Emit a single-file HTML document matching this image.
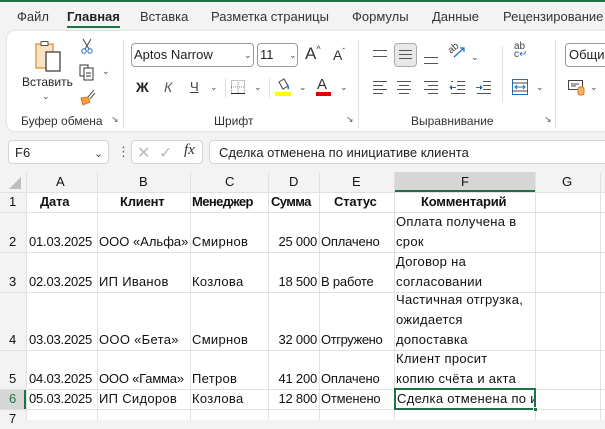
<!DOCTYPE html>
<html><head><meta charset="utf-8"><style>
*{margin:0;padding:0;box-sizing:border-box}
body{width:605px;height:420px;overflow:hidden;background:#f3f3f3;font-family:"Liberation Sans",sans-serif;position:relative;color:#222}
.a{position:absolute;white-space:nowrap}
.t{font-size:13px;top:9px;color:#333}
.pan{position:absolute;left:7px;top:31px;width:610px;height:100px;background:#fff;border-radius:8px;box-shadow:0 0 2px #ccc}
.sep{position:absolute;width:1px;background:#e0e0e0}
.gl{font-size:12px;top:114px;color:#333}
.box{position:absolute;border:1px solid #9a9a9a;border-radius:4px;background:#fff}
.chev{font-size:9px;color:#444}
.grid{position:absolute;left:0;top:172px;width:605px;height:248px;background:#fff}
.c{position:absolute;font-size:13px;color:#111;letter-spacing:-0.2px;white-space:nowrap;line-height:20px}
.w{letter-spacing:0.3px}
.hl{position:absolute;left:0;width:605px;height:1px;background:#e1e1e1}
.vl{position:absolute;top:0;width:1px;height:248px;background:#e1e1e1}
.ln{position:absolute;height:1px;background:#555}
</style></head><body>
<div class="a" style="left:0;top:0;width:605px;height:2px;background:#1e7145"></div>
<div class="a t" style="left:17px">Файл</div>
<div class="a t" style="left:67px;font-weight:bold;color:#222">Главная</div>
<div class="a" style="left:67px;top:26px;width:53px;height:2px;background:#1e7145"></div>
<div class="a t" style="left:140px">Вставка</div>
<div class="a t" style="left:211px">Разметка страницы</div>
<div class="a t" style="left:352px">Формулы</div>
<div class="a t" style="left:432px">Данные</div>
<div class="a t" style="left:503px">Рецензирование</div>

<div class="pan"></div>
<svg class="a" style="left:33px;top:40px" width="32" height="32" viewBox="0 0 32 32"><rect x="3" y="4" width="17" height="24" fill="#fbe3c4" stroke="#d98a2b" stroke-width="1.2"/><rect x="8" y="1.5" width="7" height="4" fill="#fff" stroke="#555"/><rect x="13" y="12" width="14" height="19" fill="#fff" stroke="#333" stroke-width="1.2"/></svg>
<div class="a" style="left:22px;top:75px;font-size:12px">Вставить</div>
<div class="a chev" style="left:42px;top:91px">⌄</div>
<svg class="a" style="left:80px;top:38px" width="14" height="16"><path d="M3 1 L9 11 M11 1 L5 11" stroke="#444" fill="none"/><circle cx="4" cy="13" r="2.2" stroke="#1f6fc5" fill="none"/><circle cx="10" cy="13" r="2.2" stroke="#1f6fc5" fill="none"/></svg>
<svg class="a" style="left:79px;top:64px" width="16" height="17"><rect x="1" y="1" width="8" height="11" fill="none" stroke="#333"/><rect x="5" y="4" width="9" height="12" fill="#fff" stroke="#333"/><path d="M7 9h5M7 12h5" stroke="#333"/></svg>
<div class="a chev" style="left:102px;top:66px">⌄</div>
<svg class="a" style="left:79px;top:88px" width="18" height="18"><path d="M2 10 L9 9 L11 14 L4 17 Z" fill="#f0a33a" stroke="#d9781a"/><path d="M9 9 L15 2 M11 11 L16 5" stroke="#555" fill="none"/></svg>
<div class="a gl" style="left:21px">Буфер обмена</div>
<div class="a" style="left:111px;top:114px;font-size:9px;color:#555">↘</div>
<div class="sep" style="left:123px;top:40px;height:88px"></div>
<div class="box" style="left:131px;top:43px;width:123px;height:24px"></div>
<div class="a" style="left:134px;top:47px;font-size:13px">Aptos Narrow</div>
<div class="a chev" style="left:244px;top:50px">⌄</div>
<div class="box" style="left:257px;top:43px;width:41px;height:24px"></div>
<div class="a" style="left:260px;top:47px;font-size:13px">11</div>
<div class="a chev" style="left:289px;top:50px">⌄</div>
<div class="a" style="left:305px;top:44px;font-size:17px;color:#333">A<span style="font-size:9px;vertical-align:top">^</span></div>
<div class="a" style="left:333px;top:47px;font-size:14px;color:#333">A<span style="font-size:8px;vertical-align:top">ˇ</span></div>
<div class="a" style="left:136px;top:79px;font-size:14px;font-weight:bold">Ж</div>
<div class="a" style="left:164px;top:79px;font-size:14px;font-style:italic;color:#555">К</div>
<div class="a" style="left:190px;top:79px;font-size:13px;text-decoration:underline;color:#444">Ч</div>
<div class="a chev" style="left:210px;top:82px">⌄</div>
<div class="sep" style="left:225px;top:78px;height:20px"></div>
<svg class="a" style="left:231px;top:80px" width="14" height="14"><rect x="0.5" y="0.5" width="13" height="13" fill="none" stroke="#888" stroke-dasharray="1 1"/><path d="M7 0v14M0 7h14" stroke="#888" stroke-dasharray="1 1"/><path d="M0 13.5h14" stroke="#222"/></svg>
<div class="a chev" style="left:254px;top:82px">⌄</div>
<div class="sep" style="left:269px;top:78px;height:20px"></div>
<svg class="a" style="left:275px;top:78px" width="16" height="18"><path d="M4 4 L9 1 L13 8 L8 11 Z" fill="none" stroke="#444"/><path d="M12 6 q2 3 1 5" stroke="#1f6fc5" fill="none" stroke-width="1.5"/><rect x="0" y="14" width="16" height="4" fill="#ffff00"/></svg>
<div class="a chev" style="left:299px;top:82px">⌄</div>
<div class="a" style="left:317px;top:76px;font-size:15px;color:#333">A</div>
<div class="a" style="left:316px;top:92px;width:15px;height:4px;background:#e00000"></div>
<div class="a chev" style="left:340px;top:82px">⌄</div>
<div class="a gl" style="left:214px">Шрифт</div>
<div class="a" style="left:346px;top:114px;font-size:9px;color:#555">↘</div>
<div class="sep" style="left:358px;top:40px;height:88px"></div>
<div class="ln" style="left:373px;top:50px;width:14px"></div><div class="ln" style="left:373px;top:56px;width:14px"></div>
<div class="a" style="left:394px;top:43px;width:23px;height:24px;background:#e8e8e8;border:1px solid #aaa;border-radius:4px"></div>
<div class="ln" style="left:399px;top:50px;width:13px"></div><div class="ln" style="left:399px;top:54px;width:13px"></div><div class="ln" style="left:399px;top:58px;width:13px"></div>
<div class="ln" style="left:424px;top:57px;width:14px"></div><div class="ln" style="left:424px;top:63px;width:14px"></div>
<div class="a" style="left:448px;top:43px;font-size:10px;color:#444;transform:rotate(-40deg)">ab</div>
<svg class="a" style="left:452px;top:45px" width="14" height="14"><path d="M2 12 L12 3 M8 3h4v4" stroke="#1f6fc5" fill="none" stroke-width="1.2"/></svg>
<div class="a chev" style="left:471px;top:52px">⌄</div>
<svg class="a" style="left:373px;top:80px" width="120" height="14" stroke="#555" stroke-width="1">
<path d="M0 1.5h14M0 5.5h10M0 9.5h14M0 13.5h10"/>
<path d="M24 1.5h14M26 5.5h10M24 9.5h14M26 13.5h10"/>
<path d="M51 1.5h14M55 5.5h10M51 9.5h14M55 13.5h10"/>
<path d="M84 1.5h8M84 5.5h8M84 9.5h8M78 13.5h14M78 1.5h2"/><path d="M77 7.5h6M79 5.5l-2 2 2 2" stroke="#1f6fc5"/>
<path d="M110 1.5h8M110 5.5h8M110 9.5h8M104 13.5h14"/><path d="M103 7.5h6M107 5.5l2 2-2 2" stroke="#1f6fc5"/>
</svg>
<div class="sep" style="left:502px;top:46px;height:56px"></div>
<div class="a" style="left:514px;top:43px;font-size:10px;line-height:8px;color:#444">ab<br>c<span style="color:#1f6fc5">↵</span></div>
<svg class="a" style="left:512px;top:79px" width="16" height="16"><rect x="0.5" y="0.5" width="15" height="15" fill="none" stroke="#1f6fc5"/><path d="M0 4h16M0 12h16" stroke="#444"/><path d="M3 8h10M5 6l-2 2 2 2M11 6l2 2-2 2" stroke="#1f6fc5" fill="none"/></svg>
<div class="a chev" style="left:536px;top:82px">⌄</div>
<div class="a gl" style="left:411px">Выравнивание</div>
<div class="a" style="left:544px;top:114px;font-size:9px;color:#555">↘</div>
<div class="sep" style="left:555px;top:40px;height:88px"></div>
<div class="box" style="left:565px;top:43px;width:60px;height:24px"></div>
<div class="a" style="left:569px;top:47px;font-size:13px">Общий</div>
<svg class="a" style="left:568px;top:80px" width="18" height="16"><rect x="0.5" y="0.5" width="14" height="9" fill="none" stroke="#444"/><path d="M3 4h8M3 6h5" stroke="#444"/><rect x="10" y="7" width="6" height="8" rx="2" fill="#f6b26b" stroke="#d9781a"/></svg>
<div class="a chev" style="left:590px;top:82px">⌄</div>

<div class="box" style="left:8px;top:140px;width:101px;height:24px;border-color:#d5d5d5"></div>
<div class="a" style="left:15px;top:145px;font-size:13px">F6</div>
<div class="a chev" style="left:94px;top:147px;font-size:11px">⌄</div>
<div class="a" style="left:117px;top:144px;font-size:13px;color:#555">⋮</div>
<div class="box" style="left:131px;top:140px;width:72px;height:24px;border-color:#d5d5d5"></div>
<div class="a" style="left:137px;top:143px;font-size:16px;color:#bbb">✕</div>
<div class="a" style="left:159px;top:143px;font-size:16px;color:#bbb">✓</div>
<div class="a" style="left:184px;top:142px;font-size:15px;font-style:italic;font-family:'Liberation Serif',serif;color:#333">fx</div>
<div class="box" style="left:209px;top:140px;width:410px;height:24px;border-color:#d5d5d5"></div>
<div class="a" style="left:219px;top:145px;font-size:13px">Сделка отменена по инициативе клиента</div>

<div class="grid">
<div class="a" style="left:0;top:0;width:605px;height:20px;background:#f3f3f3"></div>
<div class="a" style="left:0;top:0;width:26px;height:248px;background:#f3f3f3"></div>
<div class="a" style="left:394px;top:0;width:141px;height:20px;background:#d6d6d6;border-bottom:2px solid #1e7145"></div>
<div class="a" style="left:0;top:217px;width:26px;height:20px;background:#d6d6d6;border-right:2px solid #1e7145"></div>
<svg class="a" style="left:9px;top:5px" width="13" height="13"><path d="M12 0V12H0Z" fill="#bdbdbd"/></svg>
<div class="hl" style="top:20px"></div><div class="hl" style="top:40px"></div><div class="hl" style="top:80px"></div><div class="hl" style="top:120px"></div><div class="hl" style="top:178px"></div><div class="hl" style="top:217px"></div><div class="hl" style="top:237px"></div>
<div class="vl" style="left:26px"></div><div class="vl" style="left:97px"></div><div class="vl" style="left:190px"></div><div class="vl" style="left:268px"></div><div class="vl" style="left:319px"></div><div class="vl" style="left:394px"></div><div class="vl" style="left:535px"></div><div class="vl" style="left:600px"></div>
<div class="c" style="left:56px;top:0">A</div><div class="c" style="left:139px;top:0">B</div><div class="c" style="left:225px;top:0">C</div><div class="c" style="left:289px;top:0">D</div><div class="c" style="left:352px;top:0">E</div><div class="c" style="left:461px;top:0">F</div><div class="c" style="left:562px;top:0">G</div>
<div class="c" style="left:9px;top:20px">1</div><div class="c" style="left:9px;top:60px">2</div><div class="c" style="left:9px;top:100px">3</div><div class="c" style="left:9px;top:158px">4</div><div class="c" style="left:9px;top:197px">5</div><div class="c" style="left:9px;top:217px;color:#1e7145">6</div><div class="c" style="left:9px;top:237px">7</div>
<div class="c" style="top:20px;left:40px;font-weight:bold">Дата</div>
<div class="c" style="top:20px;left:120px;font-weight:bold">Клиент</div>
<div class="c" style="top:20px;left:192px;font-weight:bold;letter-spacing:-0.6px">Менеджер</div>
<div class="c" style="top:20px;left:271px;font-weight:bold;letter-spacing:-0.6px">Сумма</div>
<div class="c" style="top:20px;left:334px;font-weight:bold">Статус</div>
<div class="c" style="top:20px;left:421px;font-weight:bold">Комментарий</div>

<div class="c" style="top:60px;left:29px">01.03.2025</div><div class="c w" style="top:60px;left:99px;letter-spacing:0">ООО «Альфа»</div><div class="c w" style="top:60px;left:192px">Смирнов</div><div class="c" style="top:60px;left:270px;width:47px;text-align:right">25 000</div><div class="c" style="top:60px;left:321px">Оплачено</div>
<div class="c w" style="top:40px;left:396px">Оплата получена в</div><div class="c w" style="top:60px;left:396px">срок</div>
<div class="c" style="top:100px;left:29px">02.03.2025</div><div class="c w" style="top:100px;left:99px">ИП Иванов</div><div class="c w" style="top:100px;left:192px">Козлова</div><div class="c" style="top:100px;left:270px;width:47px;text-align:right">18 500</div><div class="c" style="top:100px;left:321px">В работе</div>
<div class="c w" style="top:80px;left:396px">Договор на</div><div class="c w" style="top:100px;left:396px">согласовании</div>
<div class="c" style="top:158px;left:29px">03.03.2025</div><div class="c w" style="top:158px;left:99px">ООО «Бета»</div><div class="c w" style="top:158px;left:192px">Смирнов</div><div class="c" style="top:158px;left:270px;width:47px;text-align:right">32 000</div><div class="c" style="top:158px;left:321px;letter-spacing:-0.4px">Отгружено</div>
<div class="c w" style="top:118px;left:396px">Частичная отгрузка,</div><div class="c w" style="top:138px;left:396px">ожидается</div><div class="c w" style="top:158px;left:396px">допоставка</div>
<div class="c" style="top:197px;left:29px">04.03.2025</div><div class="c" style="top:197px;left:99px">ООО «Гамма»</div><div class="c w" style="top:197px;left:192px">Петров</div><div class="c" style="top:197px;left:270px;width:47px;text-align:right">41 200</div><div class="c" style="top:197px;left:321px">Оплачено</div>
<div class="c w" style="top:177px;left:396px">Клиент просит</div><div class="c w" style="top:197px;left:396px">копию счёта и акта</div>
<div class="c" style="top:217px;left:29px">05.03.2025</div><div class="c w" style="top:217px;left:99px">ИП Сидоров</div><div class="c w" style="top:217px;left:192px">Козлова</div><div class="c" style="top:217px;left:270px;width:47px;text-align:right">12 800</div><div class="c" style="top:217px;left:321px">Отменено</div>
<div class="a" style="left:394px;top:216px;width:142px;height:22px;border:2px solid #1e7145;overflow:hidden"><div class="c w" style="top:-1px;left:1px">Сделка отменена по инициативе</div></div>
<div class="a" style="left:533px;top:235px;width:5px;height:5px;background:#1e7145;border:1px solid #fff"></div>
</div>
</body></html>
